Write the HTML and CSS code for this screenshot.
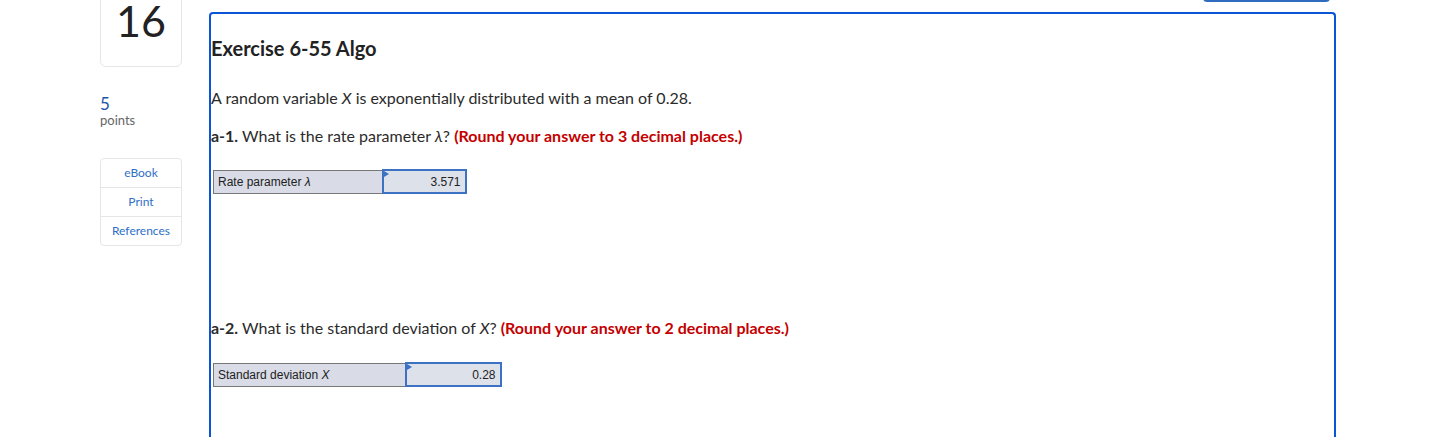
FILE: index.html
```html
<!DOCTYPE html>
<html lang="en">
<head>
  <meta charset="UTF-8" />
  <title>Exercise 6-55 Algo</title>
  <link rel="stylesheet" href="styles.css">
</head>
<body>
  <div class="page">
    <div class="side">
      <div class="qnum">16</div>
      <div class="points">
        <div class="points-value">5</div>
        <div class="points-label">points</div>
      </div>
      <ul class="tools">
        <li>eBook</li>
        <li>Print</li>
        <li>References</li>
      </ul>
    </div>

    <div class="main">
      <div class="toolbar"><span class="tool-btn"></span></div>
      <div class="question">
        <h2>Exercise 6-55 Algo</h2>
        <p class="stem">A random variable <i>X</i> is exponentially distributed with a mean of 0.28.</p>
        <p class="part"><b>a-1.</b> What is the rate parameter <i>&lambda;</i>? <b class="note">(Round your answer to 3 decimal places.)</b></p>

        <table class="answer answer-1">
          <tr>
            <td class="label">Rate parameter <i>&lambda;</i></td>
            <td class="value">3.571</td>
          </tr>
        </table>

        <p class="part part-2"><b>a-2.</b> What is the standard deviation of <i>X</i>? <b class="note">(Round your answer to 2 decimal places.)</b></p>

        <table class="answer answer-2">
          <tr>
            <td class="label">Standard deviation <i>X</i></td>
            <td class="value">0.28</td>
          </tr>
        </table>
      </div>
    </div>
  </div>
</body>
</html>
```

FILE: styles.css
```css
body {
  margin: 0;
  font-family: Lato, 'Open Sans', sans-serif;
  color: #2b2b2b;
  background: #fff;
  overflow: hidden;
}

.page {
  display: flex;
  padding-left: 100px;
}

.side {
  width: 82px;
  flex: none;
}

.qnum {
  box-sizing: border-box;
  height: 79px;
  margin-top: -12px;
  padding-top: 13px;
  border: 1px solid #e6e6e6;
  border-radius: 6px;
  text-align: center;
  font-size: 43px;
  line-height: 37px;
  color: #222;
}

.points {
  margin-top: 27px;
}

.points-value {
  font-size: 17px;
  line-height: 20px;
  color: #1d55a6;
}

.points-label {
  font-size: 13px;
  line-height: 12px;
  color: #666;
}

.tools {
  list-style: none;
  margin: 32px 0 0;
  padding: 0;
  border: 1px solid #e6e6e6;
  border-radius: 4px;
}

.tools li {
  height: 28px;
  line-height: 28px;
  text-align: center;
  font-size: 12px;
  color: #2f6fc6;
  border-top: 1px solid #e6e6e6;
}

.tools li:first-child {
  border-top: none;
}

.main {
  width: 1127px;
  margin-left: 27px;
  flex: none;
}

.toolbar {
  display: flex;
  justify-content: flex-end;
  height: 12px;
  padding-right: 6px;
}

.tool-btn {
  width: 127px;
  height: 30px;
  margin-top: -28px;
  box-sizing: border-box;
  border: 2px solid #2f6cc0;
  border-radius: 4px;
}

.question {
  height: 440px;
  border: 2px solid #0a55d6;
  border-bottom: none;
  border-radius: 4px 4px 0 0;
}

h2 {
  margin: 22px 0 0;
  font-size: 20px;
  line-height: 24px;
  font-weight: 700;
  color: #222;
}

p {
  margin: 0;
  font-size: 16px;
  line-height: 20px;
}

.stem {
  margin-top: 28px;
}

.part {
  margin-top: 18px;
}

.part-2 {
  margin-top: 124px;
}

.note {
  color: #c40000;
}

.answer {
  margin: 24px 0 0 2px;
  border-collapse: collapse;
  font-family: 'Liberation Sans', Arial, sans-serif;
  font-size: 12px;
  color: #222;
}

.answer-1 {
  margin-top: 23px;
}

.answer td {
  height: 23px;
  box-sizing: border-box;
  padding: 0 4px;
  background: #d9dce6;
  border: 1px solid #777;
}

.answer .value {
  position: relative;
  text-align: right;
  background: #dde1ea;
  border: 2px solid #3d71c4;
}

.answer .value::before {
  content: "";
  position: absolute;
  left: 0;
  top: 0;
  border-top: 3px solid transparent;
  border-bottom: 3px solid transparent;
  border-left: 5px solid #3d71c4;
}

.answer-1 .label { width: 169px; }
.answer-1 .value { width: 83px; }
.answer-2 .label { width: 192px; }
.answer-2 .value { width: 95px; }
```
